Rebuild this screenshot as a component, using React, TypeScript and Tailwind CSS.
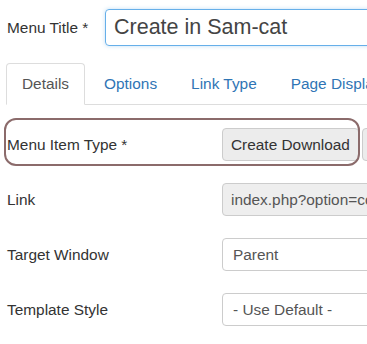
export default function App() {
  const tabs = ["Details", "Options", "Link Type", "Page Display"];

  return (
    <div className="relative w-[367px] h-[344px] overflow-hidden bg-white font-['Liberation_Sans',Arial,sans-serif] text-[15.4px] text-[#333]">
      {/* Title row */}
      <div className="flex items-center pt-[9px] pl-[7px]">
        <label className="w-[98px] shrink-0">Menu Title *</label>
        <div className="w-[300px] shrink-0 h-[37px] border border-[#66afe9] rounded-[4px] flex items-center pl-[8px] text-[21.5px] text-[#444] shadow-[0_0_4px_rgba(102,175,233,0.4)]">
          Create in Sam-cat
        </div>
      </div>

      {/* Tabs */}
      <div className="mt-[17px] ml-[6px] flex gap-[4px] border-b border-[#ddd] h-[42px] whitespace-nowrap">
        {tabs.map((t, i) => (
          <div
            key={t}
            className={
              i === 0
                ? "px-[15px] h-[42px] flex items-center border border-[#ddd] border-b-white rounded-t-[4px] text-[#555] bg-white"
                : "px-[15px] h-[41px] flex items-center text-[#2f75b5]"
            }
          >
            {t}
          </div>
        ))}
      </div>

      {/* Form rows */}
      <div className="mt-[23px] pl-[7px] flex flex-col gap-[22px] whitespace-nowrap">
        <div className="flex items-center h-[33px]">
          <label className="w-[215px] shrink-0">Menu Item Type *</label>
          <div className="flex shrink-0">
            <div className="h-[33px] px-[8px] flex items-center bg-[#ececec] border border-[#ccc] rounded-[4px] text-[#333]">
              Create Download
            </div>
            <div className="ml-[3px] h-[33px] w-[40px] bg-[#ececec] border border-[#ccc] rounded-l-[4px]" />
          </div>
        </div>

        <div className="flex items-center h-[33px]">
          <label className="w-[215px] shrink-0">Link</label>
          <div className="w-[200px] shrink-0 h-[33px] px-[8px] flex items-center bg-[#eee] border border-[#ccc] rounded-[4px] text-[#555]">
            index.php?option=com_samcat
          </div>
        </div>

        <div className="flex items-center h-[33px]">
          <label className="w-[215px] shrink-0">Target Window</label>
          <div className="w-[200px] shrink-0 h-[33px] px-[10px] flex items-center bg-white border border-[#ccc] rounded-[4px] text-[#555]">
            Parent
          </div>
        </div>

        <div className="flex items-center h-[33px]">
          <label className="w-[215px] shrink-0">Template Style</label>
          <div className="w-[200px] shrink-0 h-[33px] px-[10px] flex items-center bg-white border border-[#ccc] rounded-[4px] text-[#555]">
            - Use Default -
          </div>
        </div>
      </div>

      {/* Highlight annotation */}
      <div className="absolute left-[4px] top-[118px] w-[356px] h-[48px] border-2 border-[#8b6b6b] rounded-[12px] pointer-events-none" />
    </div>
  );
}
